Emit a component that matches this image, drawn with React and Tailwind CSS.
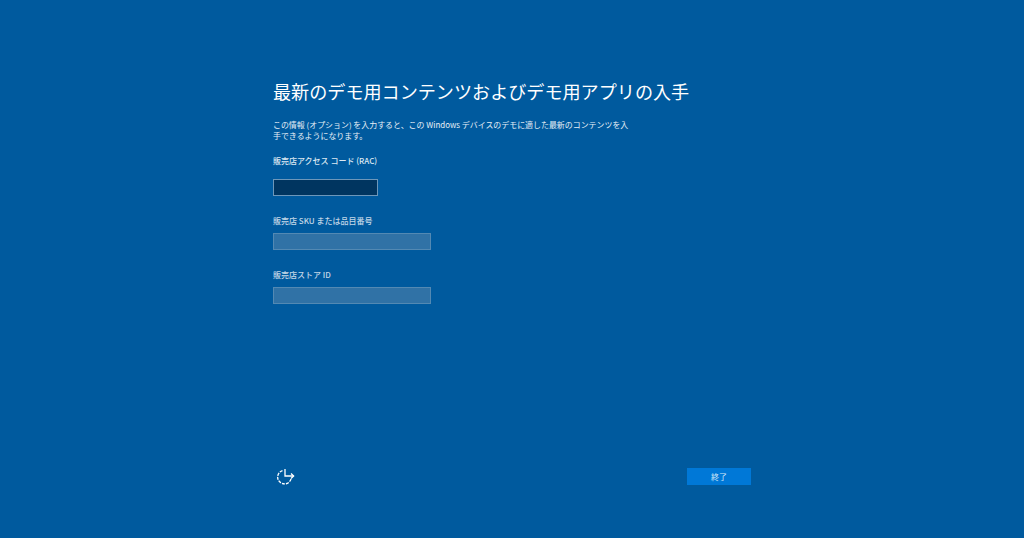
import React from "react";

const fontStack = "font-['Noto_Sans_CJK_JP','Noto_Sans',sans-serif]";

function Field({ label, active, className }) {
  return (
    <div className={className}>
      <div className={`text-[8px] leading-[12px] font-medium ${active ? "text-[#dce8f2]" : "text-[#c3d7e7]"}`}>{label}</div>
      {active ? (
        <div className="mt-[12px] h-[17px] w-[105px] border border-[#6d97ba] bg-[#003560]" />
      ) : (
        <div className="mt-[6px] h-[17px] w-[158px] border border-[#5389b3] bg-[#3072a6]" />
      )}
    </div>
  );
}

function AccessIcon() {
  return (
    <svg className="ml-[3px]" width="20" height="18" viewBox="0 0 20 18" fill="none" stroke="#ffffff" strokeWidth="1.3">
      <path d="M6.5 3.6 A6.8 6.8 0 1 0 15.2 11" strokeDasharray="3 1.1" />
      <path d="M9 2 V9 H17.5" />
      <path d="M15 6.6 L17.6 9 L15 11.4" />
    </svg>
  );
}

export default function App() {
  return (
    <div className={`h-[538px] w-full bg-[#005a9e] text-white ${fontStack}`}>
      <div className="mx-auto flex h-full w-[478px] flex-col pt-[79px] pb-[53px]">
        <h1 className="text-[18.1px] leading-[24px] font-normal whitespace-nowrap">
          最新のデモ用コンテンツおよびデモ用アプリの入手
        </h1>
        <p className="mt-[16px] w-[360px] text-[7.95px] leading-[11px] text-[#e6eff6]">
          この情報 (オプション) を入力すると、この Windows デバイスのデモに適した最新のコンテンツを入手できるようになります。
        </p>
        <Field className="mt-[14px]" label="販売店アクセス コード (RAC)" active />
        <Field className="mt-[19px]" label="販売店 SKU または品目番号" />
        <Field className="mt-[19px]" label="販売店ストア ID" />
        <div className="mt-auto flex items-center justify-between">
          <AccessIcon />
          <button className="h-[17px] w-[64px] bg-[#0078d7] text-[8px] leading-[17px] text-[#d5e8f7]">終了</button>
        </div>
      </div>
    </div>
  );
}
